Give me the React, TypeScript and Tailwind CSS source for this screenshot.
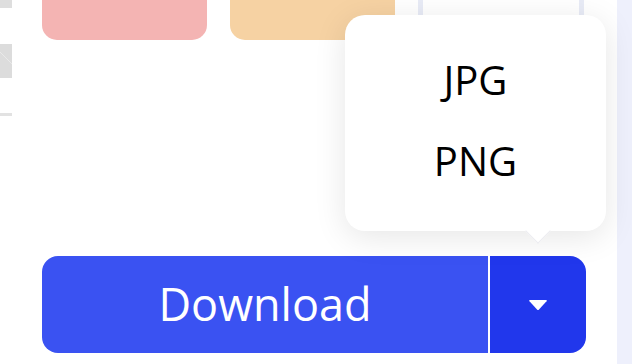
import React from "react";

export default function App() {
  return (
    <div className="relative w-[632px] h-[364px] bg-white overflow-hidden flex" style={{ fontFamily: '"Open Sans", "Noto Sans", sans-serif' }}>
      {/* left strip */}
      <div className="w-[12px] flex flex-col shrink-0">
        <div className="h-[8px] bg-[#dedede]" />
        <div className="h-[36px]" />
        <div className="relative h-[34px] bg-[#dcdcdc] overflow-hidden">
          <svg width="12" height="34" className="absolute inset-0">
            <line x1="0" y1="8" x2="12" y2="20" stroke="#e9e9e9" strokeWidth="1" />
          </svg>
        </div>
        <div className="h-[35px]" />
        <div className="h-[3px] bg-[#e2e2e2]" />
      </div>

      {/* main */}
      <div className="flex-1 flex flex-col pl-[30px] pr-[31px]">
        <div className="flex gap-[23px] mt-[-20px] h-[60px]">
          <div className="w-[165px] h-full rounded-[15px] bg-[#f4b4b3]" />
          <div className="w-[165px] h-full rounded-[15px] bg-[#f6d2a3]" />
          <div className="w-[166px] h-[80px] rounded-[12px] border-[5px] border-[#e8ebf6] bg-white" />
        </div>
        <div className="flex-1" />
        <div className="flex h-[97px] mb-[11px] rounded-[16px] overflow-hidden">
          <div className="w-[446px] bg-[#3a52f2] flex items-center justify-center text-white text-[45px] leading-none pb-[2px]">
            Download
          </div>
          <div className="flex-1 bg-[#2137ec] border-l-[2px] border-white flex items-center justify-center pr-[1px]">
            <svg width="20" height="12" viewBox="0 0 20 12">
              <path d="M2 1 H18 Q19.5 1 18.5 2.2 L11 10.4 Q10 11.4 9 10.4 L1.5 2.2 Q0.5 1 2 1 Z" fill="#ffffff" />
            </svg>
          </div>
        </div>
      </div>

      {/* right lavender panel */}
      <div className="w-[15px] shrink-0 bg-[#eef0fc]" />

      {/* popup menu */}
      <div className="absolute left-[345px] top-[15px] w-[261px] h-[216px] bg-white rounded-[20px] shadow-[0_6px_32px_rgba(0,0,0,0.10)] flex flex-col items-center pt-[24px] text-black text-[40px] leading-none">
        <div className="absolute left-[184px] bottom-[-9px] w-[18px] h-[18px] bg-white rotate-45 border-r border-b border-[#ececf0]" />
        <div className="h-[81px] flex items-center">JPG</div>
        <div className="h-[81px] flex items-center">PNG</div>
      </div>
    </div>
  );
}
